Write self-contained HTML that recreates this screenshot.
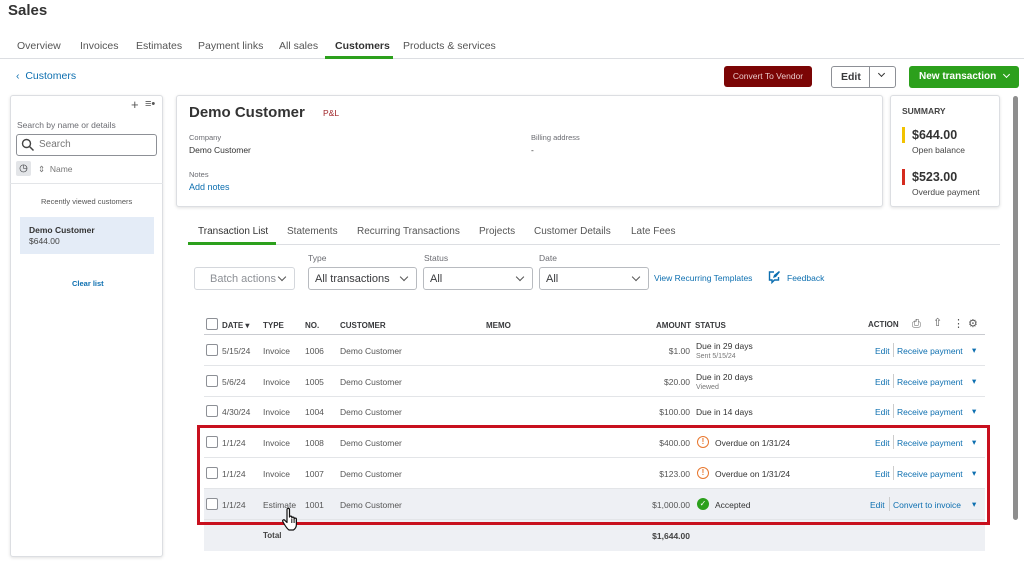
<!DOCTYPE html>
<html><head><meta charset="utf-8"><style>
*{box-sizing:border-box;margin:0;padding:0}
body{width:1024px;height:566px;overflow:hidden;background:#fff;font-family:"Liberation Sans",sans-serif;color:#393a3d;position:relative}
.a{position:absolute;white-space:nowrap}
.blue{color:#0d6fb0}
.box{position:absolute;background:#fff;border:1px solid #dcdee2;border-radius:3px;box-shadow:0 1px 3px rgba(0,0,0,.12)}
.sel{position:absolute;border:1px solid #b8bbc0;border-radius:3px;height:23px;font-size:11px;padding:5px 6px;background:#fff}
.sel:after{content:"";position:absolute;right:9px;top:6px;width:5px;height:5px;border-right:1.3px solid #555;border-bottom:1.3px solid #555;transform:rotate(45deg)}
.cb{position:absolute;width:12px;height:12px;border:1px solid #8d9096;border-radius:2px;background:#fff}
.row{position:absolute;left:204px;width:781px;height:31px;border-bottom:1px solid #e3e5e8;font-size:8.5px;color:#555}
.row span{position:absolute;top:11px}
.hd{font-size:8px;font-weight:bold;color:#393a3d}
</style></head><body>
<div class="a" style="left:8px;top:2px;font-size:15px;font-weight:bold;color:#333">Sales</div>
<div class="a" style="left:17px;top:40px;font-size:10.5px;color:#555">Overview</div>
<div class="a" style="left:80px;top:40px;font-size:10.5px;color:#555">Invoices</div>
<div class="a" style="left:136px;top:40px;font-size:10.5px;color:#555">Estimates</div>
<div class="a" style="left:198px;top:40px;font-size:10.5px;color:#555">Payment links</div>
<div class="a" style="left:279px;top:40px;font-size:10.5px;color:#555">All sales</div>
<div class="a" style="left:335px;top:40px;font-size:10.5px;font-weight:bold;color:#333">Customers</div>
<div class="a" style="left:403px;top:40px;font-size:10.5px;color:#555">Products &amp; services</div>
<div class="a" style="left:0;top:58px;width:1024px;height:1px;background:#dcdee2"></div>
<div class="a" style="left:325px;top:56px;width:68px;height:3px;background:#2ca01c"></div>

<div class="a blue" style="left:16px;top:70px;font-size:10.5px">&#8249;&nbsp; Customers</div>
<div class="a" style="left:724px;top:66px;width:88px;height:21px;background:#7b0505;border-radius:3px;color:#e9c9c9;font-size:8.5px;text-align:center;line-height:21px">Convert To Vendor</div>
<div class="a" style="left:831px;top:66px;width:65px;height:22px;border:1px solid #8d9096;border-radius:3px;font-size:10.5px;font-weight:bold;line-height:20px;padding-left:9px">Edit</div>
<div class="a" style="left:869px;top:66px;width:1px;height:22px;background:#8d9096"></div>
<div class="a" style="left:879px;top:71px;width:5px;height:5px;border-right:1.3px solid #333;border-bottom:1.3px solid #333;transform:rotate(45deg)"></div>
<div class="a" style="left:909px;top:66px;width:110px;height:22px;background:#2ca01c;border-radius:3px;color:#fff;font-size:10px;font-weight:bold;line-height:22px;padding-left:10px">New transaction</div>
<div class="a" style="left:1004px;top:72px;width:5px;height:5px;border-right:1.3px solid #fff;border-bottom:1.3px solid #fff;transform:rotate(45deg)"></div>

<div class="box" style="left:10px;top:95px;width:153px;height:462px"></div>
<div class="a" style="left:131px;top:97px;font-size:13px;color:#555">+</div>
<div class="a" style="left:145px;top:98px;font-size:11px;color:#555">&#8801;&#8226;</div>
<div class="a" style="left:17px;top:120px;font-size:8.5px;color:#6b6c72">Search by name or details</div>
<div class="a" style="left:16px;top:134px;width:141px;height:22px;border:1px solid #8d9096;border-radius:3px"></div>
<svg class="a" style="left:21px;top:138px" width="14" height="14" viewBox="0 0 14 14"><circle cx="5.5" cy="5.5" r="4" fill="none" stroke="#444" stroke-width="1.4"/><path d="M8.5 8.5l4 4" stroke="#444" stroke-width="1.5"/></svg>
<div class="a" style="left:39px;top:139px;font-size:10px;color:#777">Search</div>
<div class="a" style="left:16px;top:161px;width:15px;height:15px;background:#e3e5e8;border-radius:2px;font-size:10px;text-align:center;line-height:15px">&#9719;</div>
<div class="a" style="left:38px;top:164px;font-size:8.5px;color:#777">&#8661;&nbsp; Name</div>
<div class="a" style="left:10px;top:183px;width:153px;height:1px;background:#e3e5e8"></div>
<div class="a" style="left:41px;top:197px;font-size:7.5px;color:#555">Recently viewed customers</div>
<div class="a" style="left:20px;top:217px;width:134px;height:37px;background:#e4ecf7"></div>
<div class="a" style="left:29px;top:225px;font-size:8.5px;font-weight:bold;color:#333">Demo Customer</div>
<div class="a" style="left:29px;top:236px;font-size:8.5px;color:#444">$644.00</div>
<div class="a blue" style="left:72px;top:279px;font-size:7.5px;font-weight:bold">Clear list</div>

<div class="box" style="left:176px;top:95px;width:707px;height:112px"></div>
<div class="a" style="left:189px;top:104px;font-size:15px;font-weight:bold;color:#333">Demo Customer</div>
<div class="a" style="left:323px;top:108px;font-size:8.5px;color:#a0262a">P&amp;L</div>
<div class="a" style="left:189px;top:133px;font-size:7.5px;color:#6b6c72">Company</div>
<div class="a" style="left:189px;top:145px;font-size:8.5px;color:#333">Demo Customer</div>
<div class="a" style="left:531px;top:133px;font-size:7.5px;color:#6b6c72">Billing address</div>
<div class="a" style="left:531px;top:145px;font-size:8.5px;color:#333">-</div>
<div class="a" style="left:189px;top:170px;font-size:7.5px;color:#6b6c72">Notes</div>
<div class="a blue" style="left:189px;top:182px;font-size:9px">Add notes</div>

<div class="box" style="left:890px;top:95px;width:110px;height:112px"></div>
<div class="a" style="left:902px;top:106px;font-size:8.5px;font-weight:bold;color:#444">SUMMARY</div>
<div class="a" style="left:902px;top:127px;width:3px;height:16px;background:#f2c200"></div>
<div class="a" style="left:912px;top:128px;font-size:12.5px;font-weight:bold;color:#333">$644.00</div>
<div class="a" style="left:912px;top:145px;font-size:8.5px;color:#444">Open balance</div>
<div class="a" style="left:902px;top:169px;width:3px;height:16px;background:#d52b1e"></div>
<div class="a" style="left:912px;top:170px;font-size:12.5px;font-weight:bold;color:#333">$523.00</div>
<div class="a" style="left:912px;top:187px;font-size:8.5px;color:#444">Overdue payment</div>
<div class="a" style="left:1013px;top:96px;width:5px;height:424px;background:#8e8e8e;border-radius:3px"></div>

<div class="a" style="left:198px;top:226px;font-size:10px;color:#333">Transaction List</div>
<div class="a" style="left:287px;top:226px;font-size:10px;color:#555">Statements</div>
<div class="a" style="left:357px;top:226px;font-size:10px;color:#555">Recurring Transactions</div>
<div class="a" style="left:479px;top:226px;font-size:10px;color:#555">Projects</div>
<div class="a" style="left:534px;top:226px;font-size:10px;color:#555">Customer Details</div>
<div class="a" style="left:631px;top:226px;font-size:10px;color:#555">Late Fees</div>
<div class="a" style="left:188px;top:244px;width:812px;height:1px;background:#dcdee2"></div>
<div class="a" style="left:188px;top:242px;width:88px;height:3px;background:#2ca01c"></div>

<div class="a" style="left:308px;top:253px;font-size:8.5px;color:#6b6c72">Type</div>
<div class="a" style="left:424px;top:253px;font-size:8.5px;color:#6b6c72">Status</div>
<div class="a" style="left:539px;top:253px;font-size:8.5px;color:#6b6c72">Date</div>
<div class="sel" style="left:194px;top:267px;width:101px;color:#8d9096;border-color:#d4d7dc;padding-left:15px">Batch actions</div>
<div class="sel" style="left:308px;top:267px;width:109px">All transactions</div>
<div class="sel" style="left:423px;top:267px;width:110px">All</div>
<div class="sel" style="left:539px;top:267px;width:110px">All</div>
<div class="a blue" style="left:654px;top:273px;font-size:8.5px">View Recurring Templates</div>
<svg class="a" style="left:767px;top:270px" width="14" height="14" viewBox="0 0 14 14"><path d="M7 2H2.5v8H5v2.5L7.5 10h4V7" fill="none" stroke="#0d6fb0" stroke-width="1.4"/><path d="M6 8l1-3 5-4 1 1-4 5z" fill="#0d6fb0"/></svg>
<div class="a blue" style="left:787px;top:273px;font-size:8.5px">Feedback</div>

<div class="row" style="top:304px;height:31px;border-bottom:1px solid #c9cbd0">
<div class="cb" style="left:2px;top:14px"></div>
<span class="hd" style="left:18px;top:17px">DATE &#9662;</span><span class="hd" style="left:59px;top:17px">TYPE</span><span class="hd" style="left:101px;top:17px">NO.</span><span class="hd" style="left:136px;top:17px">CUSTOMER</span><span class="hd" style="left:282px;top:17px">MEMO</span><span class="hd" style="left:452px;top:17px">AMOUNT</span><span class="hd" style="left:491px;top:17px">STATUS</span><span class="hd" style="left:664px;top:16px">ACTION</span>
<span style="left:708px;top:14px;font-size:11px">&#9113;</span><span style="left:729px;top:12px;font-size:11px">&#8679;</span><span style="left:749px;top:13px;font-size:11px">&#8942;</span><span style="left:764px;top:13px;font-size:11px">&#9881;</span>
</div>

<div class="row" style="top:335px"><div class="cb" style="left:2px;top:9px"></div><span style="left:18px">5/15/24</span><span style="left:59px">Invoice</span><span style="left:101px">1006</span><span style="left:136px">Demo Customer</span><span style="right:295px">$1.00</span><span style="left:492px;top:6px;color:#333">Due in 29 days</span><span style="left:492px;top:18px;font-size:7px;color:#777">Sent 5/15/24</span><span class="blue" style="left:671px">Edit</span><span style="left:689px;top:8px;width:1px;height:14px;background:#ccc"></span><span class="blue" style="left:693px">Receive payment</span><span class="blue" style="left:768px;top:10px">&#9662;</span></div>
<div class="row" style="top:366px"><div class="cb" style="left:2px;top:9px"></div><span style="left:18px">5/6/24</span><span style="left:59px">Invoice</span><span style="left:101px">1005</span><span style="left:136px">Demo Customer</span><span style="right:295px">$20.00</span><span style="left:492px;top:6px;color:#333">Due in 20 days</span><span style="left:492px;top:18px;font-size:7px;color:#777">Viewed</span><span class="blue" style="left:671px">Edit</span><span style="left:689px;top:8px;width:1px;height:14px;background:#ccc"></span><span class="blue" style="left:693px">Receive payment</span><span class="blue" style="left:768px;top:10px">&#9662;</span></div>
<div class="row" style="top:396px"><div class="cb" style="left:2px;top:9px"></div><span style="left:18px">4/30/24</span><span style="left:59px">Invoice</span><span style="left:101px">1004</span><span style="left:136px">Demo Customer</span><span style="right:295px">$100.00</span><span style="left:492px;color:#333">Due in 14 days</span><span class="blue" style="left:671px">Edit</span><span style="left:689px;top:8px;width:1px;height:14px;background:#ccc"></span><span class="blue" style="left:693px">Receive payment</span><span class="blue" style="left:768px;top:10px">&#9662;</span></div>
<div class="row" style="top:427px"><div class="cb" style="left:2px;top:9px"></div><span style="left:18px">1/1/24</span><span style="left:59px">Invoice</span><span style="left:101px">1008</span><span style="left:136px">Demo Customer</span><span style="right:295px">$400.00</span><span style="left:493px;top:9px;width:12px;height:12px;border:1.3px solid #e8772e;border-radius:50%;color:#e8772e;font-size:8px;text-align:center;line-height:10px;font-weight:bold">!</span><span style="left:511px;color:#333">Overdue on 1/31/24</span><span class="blue" style="left:671px">Edit</span><span style="left:689px;top:8px;width:1px;height:14px;background:#ccc"></span><span class="blue" style="left:693px">Receive payment</span><span class="blue" style="left:768px;top:10px">&#9662;</span></div>
<div class="row" style="top:458px"><div class="cb" style="left:2px;top:9px"></div><span style="left:18px">1/1/24</span><span style="left:59px">Invoice</span><span style="left:101px">1007</span><span style="left:136px">Demo Customer</span><span style="right:295px">$123.00</span><span style="left:493px;top:9px;width:12px;height:12px;border:1.3px solid #e8772e;border-radius:50%;color:#e8772e;font-size:8px;text-align:center;line-height:10px;font-weight:bold">!</span><span style="left:511px;color:#333">Overdue on 1/31/24</span><span class="blue" style="left:671px">Edit</span><span style="left:689px;top:8px;width:1px;height:14px;background:#ccc"></span><span class="blue" style="left:693px">Receive payment</span><span class="blue" style="left:768px;top:10px">&#9662;</span></div>
<div class="row" style="top:489px;background:#eef0f4"><div class="cb" style="left:2px;top:9px"></div><span style="left:18px">1/1/24</span><span style="left:59px">Estimate</span><span style="left:101px">1001</span><span style="left:136px">Demo Customer</span><span style="right:295px">$1,000.00</span><span style="left:493px;top:9px;width:12px;height:12px;background:#2ca01c;border-radius:50%;color:#fff;font-size:8px;text-align:center;line-height:12px">&#10003;</span><span style="left:511px;color:#333">Accepted</span><span class="blue" style="left:666px">Edit</span><span style="left:685px;top:8px;width:1px;height:14px;background:#ccc"></span><span class="blue" style="left:689px">Convert to invoice</span><span class="blue" style="left:768px;top:10px">&#9662;</span></div>
<div class="row" style="top:520px;background:#eef0f4;border:none"><span style="left:59px;top:11px;font-weight:bold;color:#444;font-size:8px">Total</span><span style="right:295px;font-weight:bold;color:#444">$1,644.00</span></div>
<div class="a" style="left:197px;top:425px;width:793px;height:100px;border:3px solid #c8101e"></div>
<svg class="a" style="left:281px;top:506px" width="22" height="26" viewBox="0 0 22 26"><path d="M6 3.5c0-1.5 2.5-1.5 2.5 0V11c0-1.2 2.3-1.2 2.3 0v1c0-1.2 2.3-1.2 2.3 0v1c0-1.2 2.3-1.2 2.3 0v5.5c0 2.5-1.5 4.5-3 5.5H8C6.5 23 5 21 3.5 18.5L1.8 15.5c-.7-1.3 1-2.3 2-1.2L6 16.5z" fill="#fff" stroke="#111" stroke-width="1.2" stroke-linejoin="round"/><path d="M10.8 13v4M13.1 13v4M15.4 14v3.5" stroke="#111" stroke-width="1"/></svg>
</body></html>
